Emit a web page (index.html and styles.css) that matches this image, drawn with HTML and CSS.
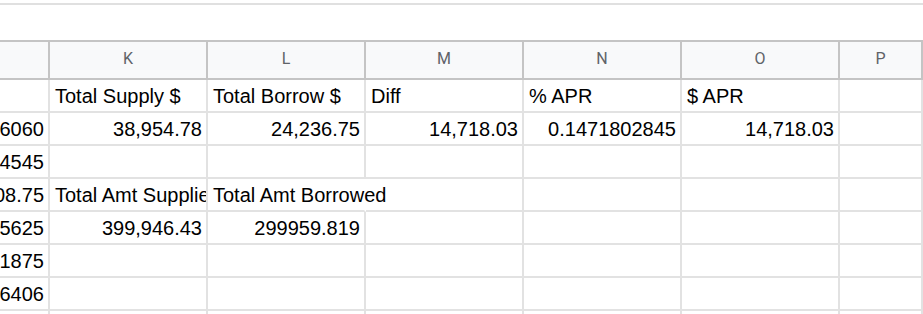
FILE: index.html
```html
<!DOCTYPE html>
<html>
<head>
<meta charset="utf-8">
<link rel="stylesheet" href="styles.css">
</head>
<body>
<div class="topbar"></div>
<div class="spacer"></div>
<div class="sheet">
  <div class="row head">
    <div class="hcell"></div>
    <div class="hcell">K</div>
    <div class="hcell">L</div>
    <div class="hcell">M</div>
    <div class="hcell">N</div>
    <div class="hcell">O</div>
    <div class="hcell">P</div>
  </div>
  <div class="row">
    <div class="cell num"></div>
    <div class="cell">Total Supply $</div>
    <div class="cell">Total Borrow $</div>
    <div class="cell">Diff</div>
    <div class="cell">% APR</div>
    <div class="cell">$ APR</div>
    <div class="cell"></div>
  </div>
  <div class="row">
    <div class="cell num">06060</div>
    <div class="cell num">38,954.78</div>
    <div class="cell num">24,236.75</div>
    <div class="cell num">14,718.03</div>
    <div class="cell num">0.1471802845</div>
    <div class="cell num">14,718.03</div>
    <div class="cell"></div>
  </div>
  <div class="row">
    <div class="cell num">54545</div>
    <div class="cell"></div>
    <div class="cell"></div>
    <div class="cell"></div>
    <div class="cell"></div>
    <div class="cell"></div>
    <div class="cell"></div>
  </div>
  <div class="row">
    <div class="cell num">208.75</div>
    <div class="cell">Total Amt Supplied</div>
    <div class="cell spill">Total Amt Borrowed</div>
    <div class="cell"></div>
    <div class="cell"></div>
    <div class="cell"></div>
    <div class="cell"></div>
  </div>
  <div class="row">
    <div class="cell num">15625</div>
    <div class="cell num">399,946.43</div>
    <div class="cell num">299959.819</div>
    <div class="cell"></div>
    <div class="cell"></div>
    <div class="cell"></div>
    <div class="cell"></div>
  </div>
  <div class="row">
    <div class="cell num">71875</div>
    <div class="cell"></div>
    <div class="cell"></div>
    <div class="cell"></div>
    <div class="cell"></div>
    <div class="cell"></div>
    <div class="cell"></div>
  </div>
  <div class="row">
    <div class="cell num">96406</div>
    <div class="cell"></div>
    <div class="cell"></div>
    <div class="cell"></div>
    <div class="cell"></div>
    <div class="cell"></div>
    <div class="cell"></div>
  </div>
  <div class="row">
    <div class="cell num"></div>
    <div class="cell"></div>
    <div class="cell"></div>
    <div class="cell"></div>
    <div class="cell"></div>
    <div class="cell"></div>
    <div class="cell"></div>
  </div>
</div>
</body>
</html>
```
FILE: styles.css
```css
html, body {
  margin: 0;
  padding: 0;
  background: #ffffff;
  overflow: hidden;
}

body {
  width: 923px;
  height: 314px;
  font-family: "Liberation Sans", Arial, sans-serif;
}

.topbar {
  height: 3px;
  border-bottom: 2px solid #e0e0e0;
}

.spacer {
  height: 35px;
}

.sheet {
  display: flex;
  flex-direction: column;
  height: 274px;
  overflow: hidden;
}

.row {
  display: grid;
  grid-template-columns: 50px repeat(5, 158px) 1fr;
  flex: none;
}

.head {
  border-top: 2px solid #c4c4c4;
}

.hcell {
  box-sizing: border-box;
  height: 38px;
  background: #f8f9fa;
  border-right: 2px solid #c4c4c4;
  border-bottom: 2px solid #c4c4c4;
  display: flex;
  align-items: center;
  justify-content: center;
  padding-bottom: 3px;
  font-family: Roboto, "Liberation Sans", Arial, sans-serif;
  font-size: 16px;
  color: #5f6368;
  overflow: hidden;
  white-space: nowrap;
}

.cell {
  box-sizing: border-box;
  height: 33px;
  border-right: 2px solid #e2e2e2;
  border-bottom: 2px solid #e2e2e2;
  display: flex;
  align-items: flex-end;
  justify-content: flex-start;
  padding: 0 4px 3px 5px;
  font-size: 20px;
  line-height: 23px;
  color: #000000;
  white-space: nowrap;
  overflow: hidden;
}

.num {
  justify-content: flex-end;
}

.spill {
  overflow: visible;
  border-right-color: transparent;
  position: relative;
  z-index: 1;
}
```
